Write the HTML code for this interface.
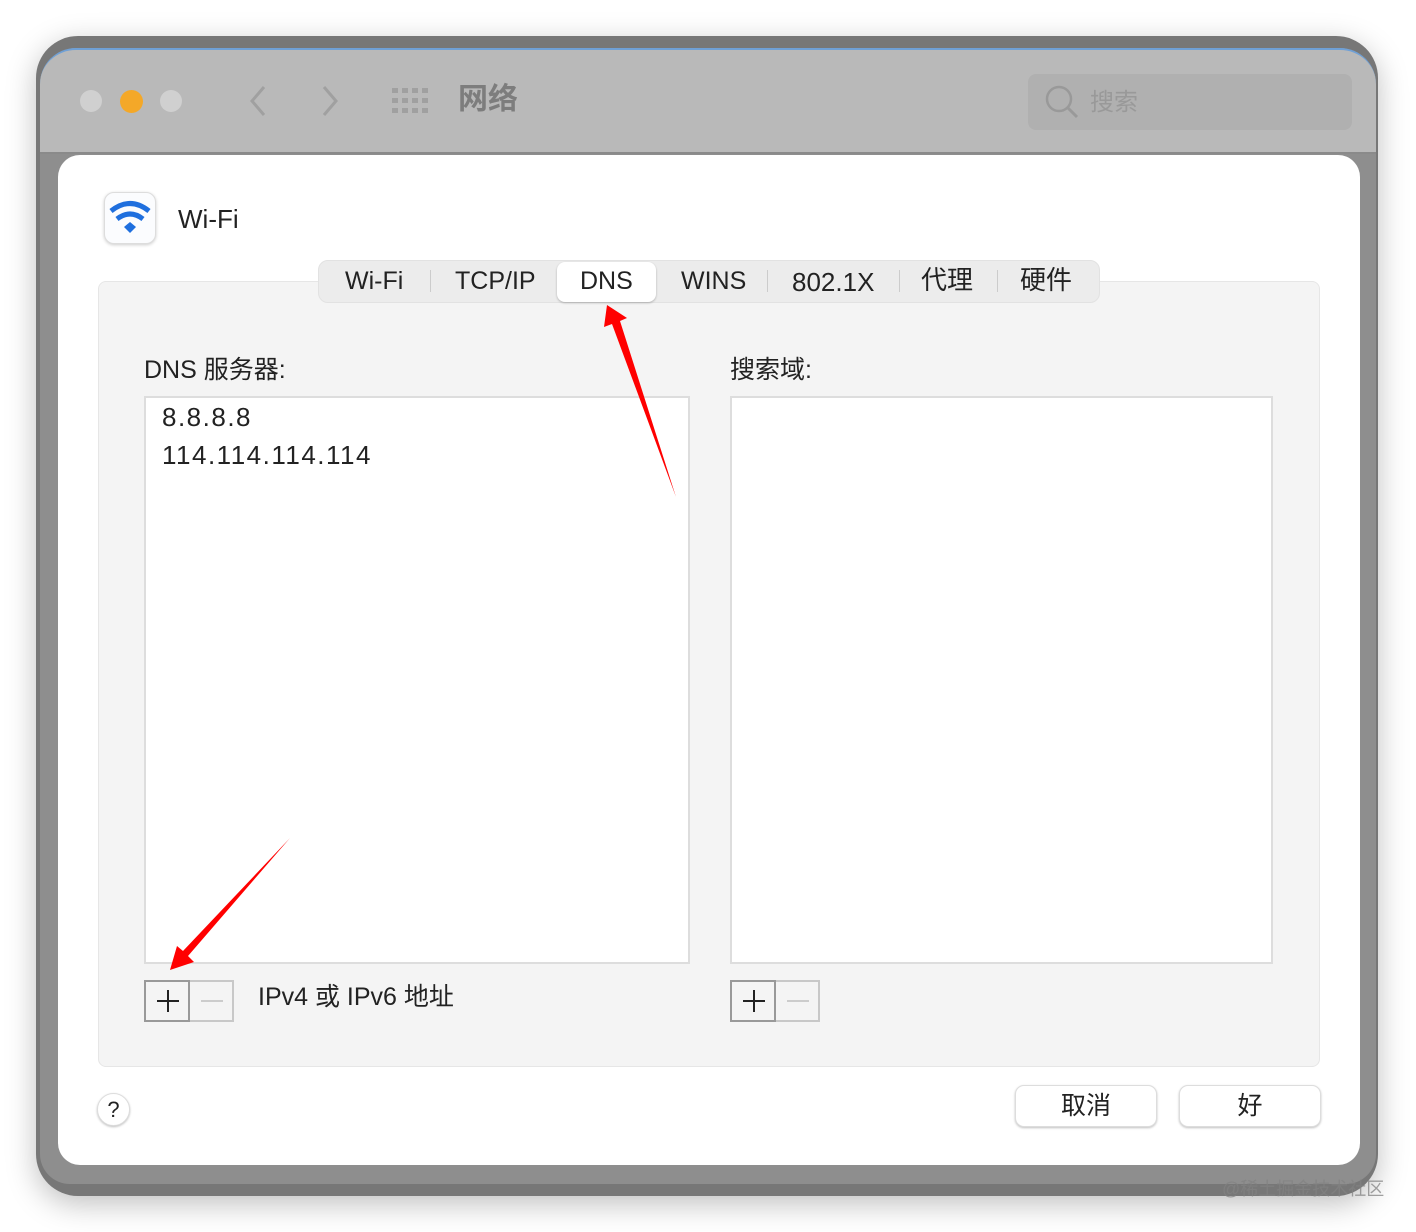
<!DOCTYPE html>
<html><head><meta charset="utf-8"><style>
*{margin:0;padding:0;box-sizing:border-box}
body{width:1416px;height:1232px;background:#fff;position:relative;overflow:hidden;font-family:"Liberation Sans","Noto Sans CJK SC",sans-serif;color:#222}
.a{position:absolute}
.t{font-size:25px;line-height:1}
</style></head><body>
<div class="a" style="left:36px;top:36px;width:1342px;height:1160px;background:#777;border-radius:42px;box-shadow:0 8px 30px rgba(0,0,0,.25)"></div>
<div class="a" style="left:40px;top:48px;width:1336px;height:1136px;background:#8e8e8e;border-radius:36px 36px 30px 30px"></div>
<div class="a" style="left:40px;top:48px;width:1336px;height:106px;background:#b9b9b9;border-radius:36px 36px 0 0;border-top:2px solid #6fa0d6;border-bottom:2px solid #8a8a8a"></div>
<div class="a" style="left:80px;top:90px;width:22px;height:22px;border-radius:50%;background:#d0d0d0"></div>
<div class="a" style="left:120px;top:90px;width:23px;height:23px;border-radius:50%;background:#f4a828"></div>
<div class="a" style="left:160px;top:90px;width:22px;height:22px;border-radius:50%;background:#d0d0d0"></div>
<svg class="a" style="left:240px;top:82px" width="110" height="40"><path d="M24 5 L12 19 L24 33" stroke="#a0a0a0" stroke-width="3" fill="none"/><path d="M84 5 L96 19 L84 33" stroke="#a0a0a0" stroke-width="3" fill="none"/></svg>
<svg class="a" style="left:392px;top:88px" width="38" height="26" fill="#a0a0a0"><rect x="0" y="0" width="6" height="5"/><rect x="10" y="0" width="6" height="5"/><rect x="20" y="0" width="6" height="5"/><rect x="30" y="0" width="6" height="5"/><rect x="0" y="10" width="6" height="5"/><rect x="10" y="10" width="6" height="5"/><rect x="20" y="10" width="6" height="5"/><rect x="30" y="10" width="6" height="5"/><rect x="0" y="20" width="6" height="5"/><rect x="10" y="20" width="6" height="5"/><rect x="20" y="20" width="6" height="5"/><rect x="30" y="20" width="6" height="5"/></svg>
<div class="a" style="left:458px;top:80px;font-size:30px;line-height:40px;font-weight:bold;color:#7d7d7d">网络</div>
<div class="a" style="left:1028px;top:74px;width:324px;height:56px;background:#b0b0b0;border-radius:8px"></div>
<svg class="a" style="left:1044px;top:84px" width="36" height="36"><circle cx="15" cy="15" r="12" stroke="#999" stroke-width="2.5" fill="none"/><path d="M24 24 L33 33" stroke="#999" stroke-width="3"/></svg>
<div class="a" style="left:1090px;top:86px;font-size:24px;line-height:34px;color:#999">搜索</div>

<div class="a" style="left:58px;top:155px;width:1302px;height:1010px;background:#fff;border-radius:22px"></div>
<div class="a" style="left:104px;top:192px;width:52px;height:52px;border-radius:10px;background:#fbfcfe;border:1px solid #ddd;box-shadow:0 1px 3px rgba(0,0,0,.2)"></div>
<svg class="a" style="left:104px;top:192px" width="52" height="52"><path d="M7 19 Q26 4 45 19" stroke="#1f6fde" stroke-width="5" fill="none"/><path d="M13 27 Q26 17 39 27" stroke="#1f6fde" stroke-width="5" fill="none"/><path d="M20 35 L26 30 L32 35 L26 41 Z" fill="#1f6fde"/></svg>
<div class="a t" style="left:178px;top:206px;font-size:26px">Wi-Fi</div>

<div class="a" style="left:98px;top:281px;width:1222px;height:786px;background:#f4f4f4;border:1px solid #e6e6e6;border-radius:8px"></div>
<div class="a" style="left:318px;top:260px;width:782px;height:43px;background:#ececec;border:1px solid #e2e2e2;border-radius:10px"></div>
<div class="a" style="left:557px;top:262px;width:99px;height:40px;background:#fff;border-radius:8px;box-shadow:0 1px 2px rgba(0,0,0,.25)"></div>
<div class="a t" style="left:345px;top:269px">Wi-Fi</div>
<div class="a" style="left:430px;top:270px;width:1px;height:22px;background:#ccc"></div>
<div class="a t" style="left:455px;top:269px">TCP/IP</div>
<div class="a t" style="left:580px;top:269px">DNS</div>
<div class="a t" style="left:681px;top:269px">WINS</div>
<div class="a" style="left:767px;top:270px;width:1px;height:22px;background:#ccc"></div>
<div class="a t" style="left:792px;top:269px;font-size:26px">802.1X</div>
<div class="a" style="left:899px;top:270px;width:1px;height:22px;background:#ccc"></div>
<div class="a t" style="left:921px;top:267px;font-size:26px">代理</div>
<div class="a" style="left:997px;top:270px;width:1px;height:22px;background:#ccc"></div>
<div class="a t" style="left:1020px;top:267px;font-size:26px">硬件</div>

<div class="a t" style="left:144px;top:358px;font-size:25px">DNS 服务器:</div>
<div class="a t" style="left:730px;top:358px;font-size:25px">搜索域:</div>
<div class="a" style="left:144px;top:396px;width:546px;height:568px;background:#fff;border:2px solid #ddd"></div>
<div class="a" style="left:730px;top:396px;width:543px;height:568px;background:#fff;border:2px solid #ddd"></div>
<div class="a t" style="left:162px;top:404px;font-size:26px;letter-spacing:1.5px">8.8.8.8</div>
<div class="a t" style="left:162px;top:442px;font-size:26px;letter-spacing:1.5px">114.114.114.114</div>

<div class="a" style="left:144px;top:980px;width:90px;height:42px;border:2px solid #c8c8c8;background:#f4f4f4"></div>
<div class="a" style="left:144px;top:980px;width:46px;height:42px;border:2px solid #999"></div>
<div class="a" style="left:157px;top:1000px;width:22px;height:2px;background:#222"></div>
<div class="a" style="left:167px;top:990px;width:2px;height:22px;background:#222"></div>
<div class="a" style="left:201px;top:1000px;width:22px;height:2px;background:#ccc"></div>
<div class="a t" style="left:258px;top:985px;font-size:25px">IPv4 或 IPv6 地址</div>

<div class="a" style="left:730px;top:980px;width:90px;height:42px;border:2px solid #c8c8c8;background:#f4f4f4"></div>
<div class="a" style="left:730px;top:980px;width:46px;height:42px;border:2px solid #999"></div>
<div class="a" style="left:743px;top:1000px;width:22px;height:2px;background:#222"></div>
<div class="a" style="left:753px;top:990px;width:2px;height:22px;background:#222"></div>
<div class="a" style="left:787px;top:1000px;width:22px;height:2px;background:#ccc"></div>

<div class="a" style="left:97px;top:1093px;width:33px;height:33px;border-radius:50%;background:#fff;border:1px solid #ddd;box-shadow:0 1px 2px rgba(0,0,0,.25);text-align:center;font-size:22px;line-height:31px">?</div>
<div class="a" style="left:1015px;top:1085px;width:142px;height:42px;border-radius:9px;background:#fff;border:1px solid #ddd;box-shadow:0 1px 2px rgba(0,0,0,.25);text-align:center;font-size:25px;line-height:40px">取消</div>
<div class="a" style="left:1179px;top:1085px;width:142px;height:42px;border-radius:9px;background:#fff;border:1px solid #ddd;box-shadow:0 1px 2px rgba(0,0,0,.25);text-align:center;font-size:25px;line-height:40px">好</div>

<div class="a" style="left:1222px;top:1178px;font-size:18px;line-height:22px;color:rgba(130,130,130,.75)">@稀土掘金技术社区</div>

<svg class="a" style="left:0;top:0" width="1416" height="1232">
<polygon points="607,305 627,318 620,321 676,497 612,324 604,327" fill="#f00"/>
<polygon points="170,970 177,946 183,951 290,838 188,956 194,962" fill="#f00"/>
</svg>
</body></html>
